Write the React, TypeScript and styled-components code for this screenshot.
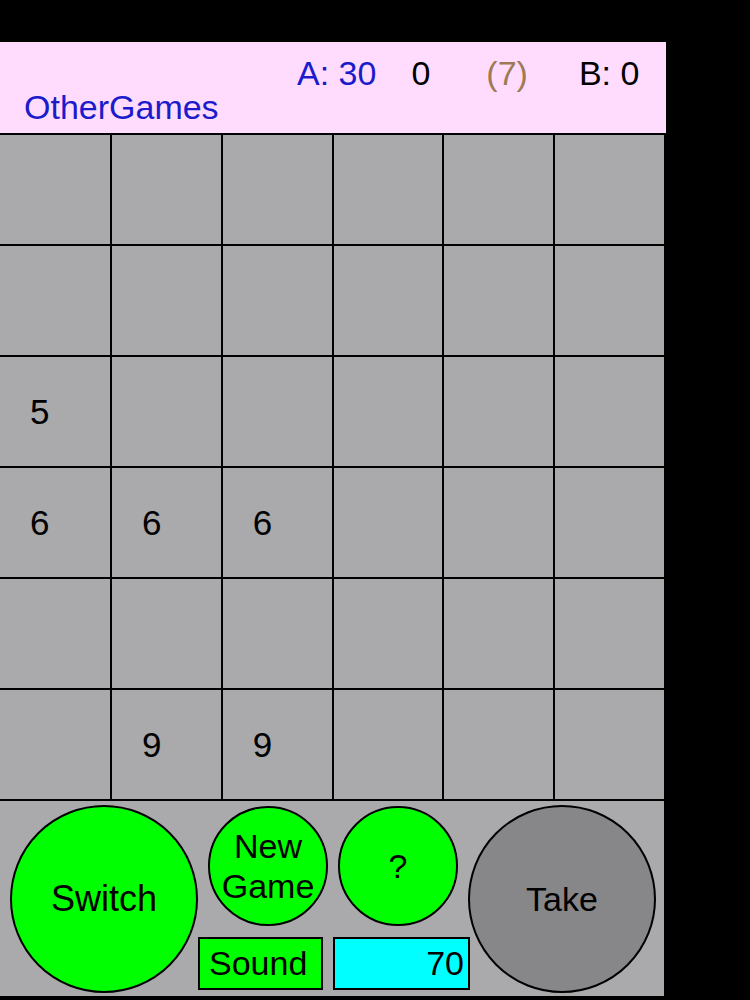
import React from 'react';
import styled, { createGlobalStyle } from 'styled-components';

const GlobalStyle = createGlobalStyle`
  html, body {
    margin: 0;
    padding: 0;
    background: #000;
  }
  body {
    font-family: 'Liberation Sans', Arial, sans-serif;
  }
`;

const Screen = styled.div`
  width: 750px;
  height: 1000px;
  background: #000;
  padding-top: 42px;
  box-sizing: border-box;
  overflow: hidden;
`;

const Panel = styled.div`
  width: 666px;
  background: #aaa9ab;
`;

const Header = styled.div`
  height: 91px;
  background: #ffdcfe;
  display: flex;
  flex-direction: column;
  box-sizing: border-box;
  padding-top: 12px;
`;

const ScoreRow = styled.div`
  display: flex;
  align-items: center;
  height: 38px;
  padding-left: 297px;
`;

const Score = styled.span<{ $color: string; $gap?: number }>`
  font-size: 34px;
  color: ${(p) => p.$color};
  margin-left: ${(p) => p.$gap ?? 0}px;
  white-space: pre;
`;

const OtherGames = styled.div`
  font-size: 34px;
  color: #1b1bcc;
  padding-left: 24px;
  margin-top: -4px;
  line-height: 38px;
`;

const Board = styled.div`
  display: grid;
  grid-template-columns: 112px repeat(5, 1fr);
`;

const Cell = styled.div`
  height: 111px;
  box-sizing: border-box;
  border-top: 2px solid #000;
  border-right: 2px solid #000;
  display: flex;
  align-items: center;
  padding-left: 30px;
  font-size: 35px;
  color: #000;
`;

const Controls = styled.div`
  height: 199px;
  box-sizing: border-box;
  border-top: 2px solid #000;
  border-bottom: 2px solid #000;
  border-right: 2px solid #000;
  display: flex;
  align-items: center;
  padding-left: 10px;
`;

const Round = styled.button<{ $size: number; $fill: string; $font?: number }>`
  width: ${(p) => p.$size}px;
  height: ${(p) => p.$size}px;
  border-radius: 50%;
  border: 2px solid #000;
  background: ${(p) => p.$fill};
  color: #000;
  font-family: 'Liberation Sans', Arial, sans-serif;
  font-size: ${(p) => p.$font ?? 34}px;
  line-height: 40px;
  padding: 0;
  flex-shrink: 0;
  display: flex;
  align-items: center;
  justify-content: center;
  text-align: center;
`;

const Middle = styled.div`
  width: 270px;
  align-self: stretch;
  display: flex;
  flex-direction: column;
  padding-top: 5px;
  box-sizing: border-box;
`;

const CircleRow = styled.div`
  display: flex;
  gap: 10px;
  padding-left: 10px;
`;

const BoxRow = styled.div`
  display: flex;
  gap: 10px;
  margin-top: 11px;
`;

const Box = styled.div<{ $width: number; $fill: string; $right?: boolean }>`
  width: ${(p) => p.$width}px;
  height: 53px;
  box-sizing: border-box;
  border: 2px solid #000;
  background: ${(p) => p.$fill};
  font-size: 34px;
  display: flex;
  align-items: center;
  justify-content: ${(p) => (p.$right ? 'flex-end' : 'flex-start')};
  padding: 0 4px 0 9px;
  flex-shrink: 0;
`;

const board: string[][] = [
  ['', '', '', '', '', ''],
  ['', '', '', '', '', ''],
  ['5', '', '', '', '', ''],
  ['6', '6', '6', '', '', ''],
  ['', '', '', '', '', ''],
  ['', '9', '9', '', '', ''],
];

const GREEN = '#00ff00';

export default function App(): JSX.Element {
  return (
    <Screen>
      <GlobalStyle />
      <Panel>
        <Header>
          <ScoreRow>
            <Score $color='#1b1bcc'>A: 30</Score>
            <Score $color='#000' $gap={35}>0</Score>
            <Score $color='#9d7a55' $gap={56}>(7)</Score>
            <Score $color='#000' $gap={51}>B: 0</Score>
          </ScoreRow>
          <OtherGames>OtherGames</OtherGames>
        </Header>
        <Board>
          {board.flat().map((v, i) => (
            <Cell key={i}>{v}</Cell>
          ))}
        </Board>
        <Controls>
          <Round $size={188} $fill={GREEN} $font={36}>Switch</Round>
          <Middle>
            <CircleRow>
              <Round $size={120} $fill={GREEN}>
                New
                <br />
                Game
              </Round>
              <Round $size={120} $fill={GREEN}>?</Round>
            </CircleRow>
            <BoxRow>
              <Box $width={125} $fill={GREEN}>Sound</Box>
              <Box $width={137} $fill='#00ffff' $right>70</Box>
            </BoxRow>
          </Middle>
          <Round $size={188} $fill='#878688'>Take</Round>
        </Controls>
      </Panel>
    </Screen>
  );
}
